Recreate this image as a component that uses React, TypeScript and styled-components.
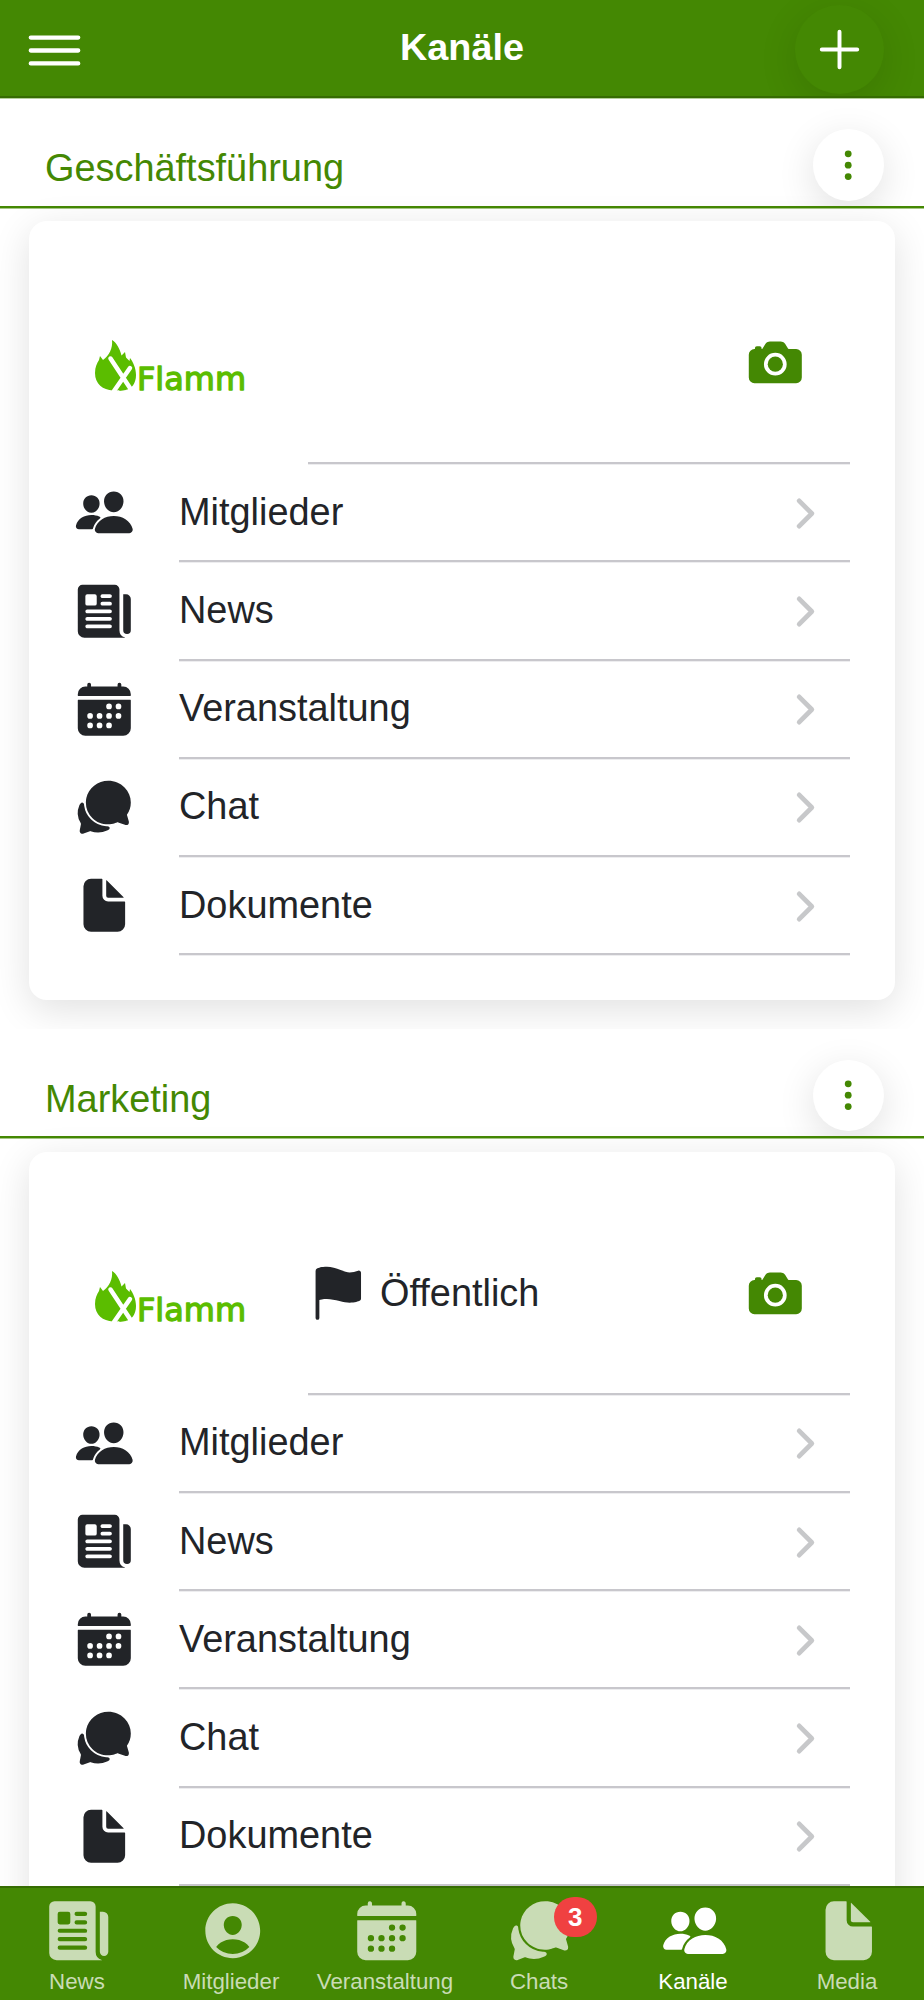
import React from "react";
import styled, { createGlobalStyle } from "styled-components";
import {
  IoAddOutline,
  IoCalendar,
  IoCamera,
  IoChatbubbles,
  IoChevronForward,
  IoDocument,
  IoEllipsisVertical,
  IoFlag,
  IoMenuOutline,
  IoNewspaper,
  IoPeople,
  IoPersonCircle,
} from "react-icons/io5";
import type { IconType } from "react-icons";

const green = "#448803";
const ink = "#222428";
const line = "#c8c7cc";

const GlobalStyle = createGlobalStyle`
  * { box-sizing: border-box; }
  body {
    margin: 0;
    background: #fff;
    color: ${ink};
    font-family: "Liberation Sans", Arial, sans-serif;
  }
  svg { display: block; flex: none; }
`;

const Screen = styled.div`
  width: 924px;
  height: 2000px;
  display: flex;
  flex-direction: column;
  overflow: hidden;
`;

const Toolbar = styled.header`
  flex: none;
  height: 98px;
  padding: 0 40px 0 20px;
  display: grid;
  grid-template-columns: 120px 1fr 100px;
  align-items: center;
  background: ${green};
  border-bottom: 2px solid #366c02;
  box-shadow: 0 1px 0 #b4cf9a;
  color: #fff;
`;

const MenuButton = styled.button`
  width: 69px;
  height: 69px;
  margin-top: 4px;
  padding: 0;
  border: 0;
  background: none;
  color: inherit;
`;

const Title = styled.h1`
  margin: 0 0 2px;
  font-size: 37.8px;
  line-height: 44px;
  text-align: center;
`;

const ActionSlot = styled.div`
  height: 96px;
  margin: 0 -40px 0 -40px;
  padding: 4.5px 40px 0 0;
  overflow: hidden;
  display: flex;
  justify-content: flex-end;
`;

const RoundButton = styled.button<{ $size: number; $filled?: boolean }>`
  flex: none;
  width: ${(p) => p.$size}px;
  height: ${(p) => p.$size}px;
  padding: 0;
  border: 0;
  border-radius: 50%;
  display: flex;
  align-items: center;
  justify-content: center;
  background: ${(p) => (p.$filled ? green : "#fff")};
  color: ${(p) => (p.$filled ? "#fff" : green)};
  box-shadow: 0 9.5px 38px rgba(0, 0, 0, 0.12);
`;

const Content = styled.main`
  flex: 1;
  min-height: 0;
  padding-top: 0.4px;
  overflow: hidden;
`;

const Section = styled.section`
  height: 930.6px;
  overflow: hidden;
`;

const SectionHeader = styled.div`
  height: 109.4px;
  padding: 31px 40px 0 45px;
  display: flex;
  align-items: flex-start;
  justify-content: space-between;
  overflow: hidden;
  border-bottom: 2px solid ${green};
  box-shadow: 0 1px 0 #a5c786;
`;

const SectionTitle = styled.h2`
  margin: 17px 0 0;
  font-size: 37.9px;
  font-weight: 400;
  line-height: 44px;
  color: ${green};
`;

const CardArea = styled.div`
  height: 821.2px;
  padding: 13.4px 29px 0;
`;

const Card = styled.article`
  height: 779px;
  border-radius: 18px;
  background: #fff;
  box-shadow: 0 9.5px 38px rgba(0, 0, 0, 0.12);
`;

const Banner = styled.div`
  height: 243px;
  padding: 0 45px 0 65.5px;
  display: flex;
`;

const LogoBox = styled.div`
  width: 213.5px;
  padding-top: 118px;
`;

const BannerBody = styled.div`
  flex: 1;
  padding: 42px 44px 0 0;
  display: flex;
  align-items: center;
  justify-content: space-between;
  border-bottom: 2px solid ${line};
  box-shadow: 0 1px 0 #ededef;
`;

const Visibility = styled.div`
  display: flex;
  align-items: center;
  gap: 11.4px;
  font-size: 37.9px;
`;

const Row = styled.div`
  height: 98.2px;
  padding: 0 45px;
  display: flex;
  align-items: center;
`;

const RowIcon = styled.div`
  width: 105px;
  padding-bottom: 1px;
`;

const RowBody = styled.div`
  flex: 1;
  height: 100%;
  padding-right: 22.5px;
  display: flex;
  align-items: center;
  justify-content: space-between;
  border-bottom: 2px solid ${line};
  box-shadow: 0 1px 0 #ededef;
  font-size: 37.9px;
`;

const Chevron = styled(IoChevronForward)`
  margin-top: 2px;
  color: #c7c8ca;

  path {
    stroke-width: 54px;
  }
`;

const TabBar = styled.nav`
  flex: none;
  height: 114px;
  display: grid;
  grid-template-columns: repeat(6, 1fr);
  background: ${green};
  border-top: 2px solid #366c02;
`;

const Tab = styled.a<{ $active?: boolean }>`
  display: flex;
  flex-direction: column;
  align-items: center;
  padding-top: 9px;
  color: ${(p) => (p.$active ? "#fff" : "#c9dcb5")};
  font-size: 22.3px;
  line-height: 26px;
`;

const TabIcon = styled.span`
  position: relative;
  width: 67.5px;
  height: 67.5px;
  margin: 0 0 4px 3px;
`;

const Badge = styled.span`
  position: absolute;
  left: 47px;
  top: 0;
  width: 43px;
  height: 40px;
  border-radius: 22px;
  background: #f04141;
  color: #fff;
  font-size: 26px;
  font-weight: 700;
  line-height: 40px;
  text-align: center;
`;

function Logo() {
  return (
    <svg width="170" height="70" viewBox="0 0 170 70" fill="#5bbd00">
      <path d="M17 1C21 3 25 10 26.5 16.5L30 13L31 18.5L34.5 22L35 19C38 23 41 29 41 36C41 44 37 50 30 51L18 51.5C8 51 0 45 0 34C0 28 2 24 4 21L5 17L8 21C14 17 18 9 17 1Z" />
      <path d="M15.5 19.5L35 49M35 29L19 52" fill="none" stroke="#fff" strokeWidth="4.5" strokeLinecap="round" />
      <path d="M24 52L28 46L31 51Z" />
      <text
        x="42"
        y="50.5"
        fontFamily="DejaVu Sans, sans-serif"
        fontSize="31.5"
        stroke="#5bbd00"
        strokeWidth="1.3"
        strokeLinejoin="round"
        textLength="109"
        lengthAdjust="spacingAndGlyphs"
      >
        Flamm
      </text>
    </svg>
  );
}

const entries: { label: string; icon: IconType }[] = [
  { label: "Mitglieder", icon: IoPeople },
  { label: "News", icon: IoNewspaper },
  { label: "Veranstaltung", icon: IoCalendar },
  { label: "Chat", icon: IoChatbubbles },
  { label: "Dokumente", icon: IoDocument },
];

const tabs: { label: string; icon: IconType; badge?: number; active?: boolean }[] = [
  { label: "News", icon: IoNewspaper },
  { label: "Mitglieder", icon: IoPersonCircle },
  { label: "Veranstaltung", icon: IoCalendar },
  { label: "Chats", icon: IoChatbubbles, badge: 3 },
  { label: "Kanäle", icon: IoPeople, active: true },
  { label: "Media", icon: IoDocument },
];

function Channel({ name, isPublic }: { name: string; isPublic?: boolean }) {
  return (
    <Section>
      <SectionHeader>
        <SectionTitle>{name}</SectionTitle>
        <RoundButton $size={71.2} aria-label="Optionen">
          <IoEllipsisVertical size={36.4} />
        </RoundButton>
      </SectionHeader>
      <CardArea>
        <Card>
          <Banner>
            <LogoBox>
              <Logo />
            </LogoBox>
            <BannerBody>
              <Visibility>
                {isPublic && (
                  <>
                    <IoFlag size={60.6} />
                    Öffentlich
                  </>
                )}
              </Visibility>
              <IoCamera size={60.6} color={green} />
            </BannerBody>
          </Banner>
          {entries.map(({ label, icon: Icon }) => (
            <Row key={label}>
              <RowIcon>
                <Icon size={60.6} />
              </RowIcon>
              <RowBody>
                {label}
                <Chevron size={45} />
              </RowBody>
            </Row>
          ))}
        </Card>
      </CardArea>
    </Section>
  );
}

export default function App() {
  return (
    <Screen>
      <GlobalStyle />
      <Toolbar>
        <MenuButton aria-label="Menü">
          <IoMenuOutline size={69} />
        </MenuButton>
        <Title>Kanäle</Title>
        <ActionSlot>
          <RoundButton $size={89} $filled aria-label="Neu">
            <IoAddOutline size={63} />
          </RoundButton>
        </ActionSlot>
      </Toolbar>
      <Content>
        <Channel name="Geschäftsführung" />
        <Channel name="Marketing" isPublic />
      </Content>
      <TabBar>
        {tabs.map(({ label, icon: Icon, badge, active }) => (
          <Tab key={label} $active={active}>
            <TabIcon>
              <Icon size={67.5} />
              {badge && <Badge>{badge}</Badge>}
            </TabIcon>
            {label}
          </Tab>
        ))}
      </TabBar>
    </Screen>
  );
}
